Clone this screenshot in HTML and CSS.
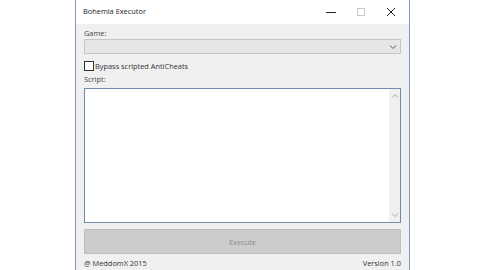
FILE: index.html
```html
<!DOCTYPE html>
<html>
<head>
<meta charset="utf-8">
<link rel="stylesheet" href="styles.css">
</head>
<body>
<div class="desk">
  <div class="window">
    <div class="titlebar">
      <span class="title">Bohemia Executor</span>
      <div class="controls">
        <span class="ctl"><svg width="10" height="10" viewBox="0 0 10 10"><path d="M0 5.5h10" stroke="#222" stroke-width="1"/></svg></span>
        <span class="ctl"><svg width="10" height="10" viewBox="0 0 10 10"><rect x="1.5" y="1.5" width="7" height="7" fill="none" stroke="#c8c8c8" stroke-width="1"/></svg></span>
        <span class="ctl"><svg width="10" height="10" viewBox="0 0 10 10"><path d="M1 1L9 9M9 1L1 9" stroke="#222" stroke-width="1"/></svg></span>
      </div>
    </div>
    <div class="client">
      <div class="label">Game:</div>
      <div class="combo"><svg class="chev" width="8" height="6" viewBox="0 0 8 6"><path d="M1 1.5L4 4.5L7 1.5" fill="none" stroke="#555" stroke-width="1"/></svg></div>
      <div class="check"><span class="box"></span><span>Bypass scripted AntiCheats</span></div>
      <div class="label">Script:</div>
      <div class="textarea">
        <div class="text"></div>
        <div class="scroll">
          <svg width="8" height="6" viewBox="0 0 8 6"><path d="M1 4.5L4 1.5L7 4.5" fill="none" stroke="#aaa" stroke-width="1"/></svg>
          <svg width="8" height="6" viewBox="0 0 8 6"><path d="M1 1.5L4 4.5L7 1.5" fill="none" stroke="#aaa" stroke-width="1"/></svg>
        </div>
      </div>
      <div class="button">Execute</div>
      <div class="footer"><span>@ MeddomX 2015</span><span>Version 1.0</span></div>
    </div>
  </div>
</div>
</body>
</html>
```
FILE: styles.css
```css
html, body { margin: 0; padding: 0; background: #fff; }
body { width: 480px; height: 270px; overflow: hidden; font-family: "Open Sans", "DejaVu Sans", sans-serif; font-size: 7.4px; color: #333; }
.desk { padding-left: 75px; }
.window { width: 335px; height: 270px; border: 1px solid #7f9bbb; border-top: none; border-bottom: none; background: #f0f0f0; box-sizing: border-box; }
.titlebar { height: 24px; background: #fff; display: flex; align-items: center; justify-content: space-between; padding-left: 7px; padding-right: 3px; }
.title { color: #222; margin-top: -2px; }
.controls { display: flex; height: 24px; }
.ctl { width: 30px; display: flex; align-items: center; justify-content: center; }
.client { padding: 4px 8px 0 8px; display: flex; flex-direction: column; }
.label { height: 11px; line-height: 11px; color: #444; }
.combo { height: 15px; background: #e6e6e6; border: 1px solid #c5c5c5; box-sizing: border-box; display: flex; align-items: center; justify-content: flex-end; padding-right: 3px; }
.check { display: flex; align-items: center; height: 12px; margin-top: 6px; margin-bottom: 2px; gap: 1px; color: #333; }
.box { width: 10px; height: 10px; border: 1px solid #333; background: #fff; box-sizing: border-box; }
.textarea { margin-top: 3px; height: 135px; border: 1px solid #6e8cae; background: #fff; box-sizing: border-box; display: flex; }
.text { flex: 1; }
.scroll { width: 11px; background: #f0f0f0; display: flex; flex-direction: column; justify-content: space-between; align-items: center; padding: 4px 0; }
.button { margin-top: 6px; height: 25px; background: #cccccc; border: 1px solid #bfbfbf; box-sizing: border-box; display: flex; align-items: center; justify-content: center; color: #8a8a8a; }
.footer { display: flex; justify-content: space-between; margin-top: 3px; height: 12px; line-height: 12px; color: #333; }
```
